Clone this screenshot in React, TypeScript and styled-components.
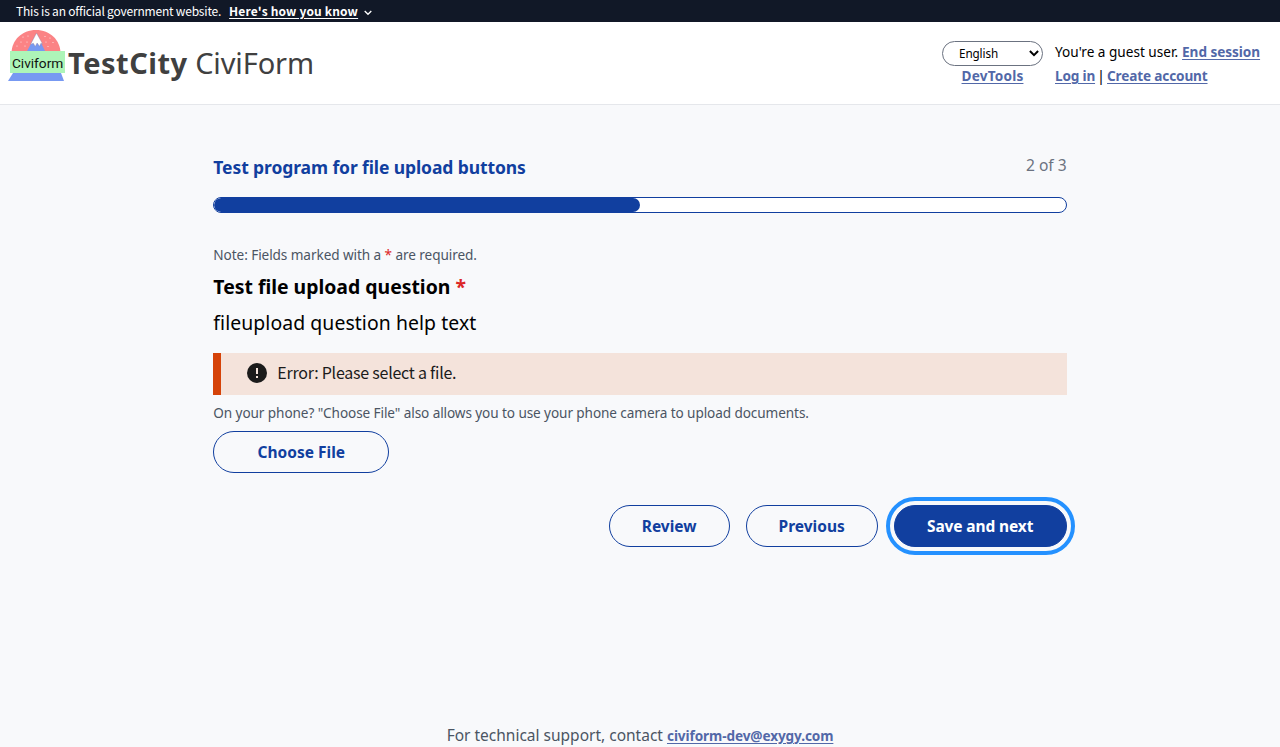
import React from 'react';
import styled, { createGlobalStyle, css } from 'styled-components';

const ui = '"Noto Sans", "Open Sans", sans-serif';
const notice = '"Noto Sans CJK SC", "Noto Sans", sans-serif';

const GlobalStyle = createGlobalStyle`
  *, *::before, *::after { box-sizing: border-box; }
  html, body { margin: 0; padding: 0; }
  body {
    height: 100vh;
    overflow: hidden;
    background: #f8f9fb;
    color: #000;
    font-family: ${ui};
  }
  h1, h2, p { margin: 0; font-weight: 400; }
`;

const Track = styled.span<{ $t: number }>`
  letter-spacing: ${(p) => p.$t}px;
`;

const Banner = styled.div`
  display: flex;
  align-items: center;
  height: 22px;
  padding: 0 16px;
  background: #111827;
  color: #fff;
  font: 400 12px/22px ${notice};
  letter-spacing: -0.2px;
  white-space: nowrap;
`;

const BannerToggle = styled.a`
  display: flex;
  align-items: center;
  margin-left: 8px;
  font-weight: 700;
  letter-spacing: 0.16px;
  svg { margin: 3px 0 0 6px; }
`;

const Underlined = styled.span`
  text-decoration: underline;
  text-underline-offset: 2px;
`;

const Header = styled.header`
  display: flex;
  justify-content: space-between;
  height: 83px;
  padding: 0 20px 0 8px;
  background: #fff;
  border-bottom: 1px solid #e5e7eb;
`;

const Brand = styled.div`
  display: flex;
  align-items: flex-start;
  padding-top: 8px;
`;

const BrandName = styled.h1`
  margin: 13px 0 0 3px;
  color: #404040;
  font-size: 29px;
  line-height: 40px;
  white-space: nowrap;
  b { letter-spacing: 0.5px; }
`;

const HeaderTools = styled.div`
  display: flex;
  gap: 12px;
  padding-top: 19px;
`;

const LanguageColumn = styled.div`
  display: flex;
  flex-direction: column;
  align-items: center;
  width: 101px;
`;

const LanguageSelect = styled.div`
  display: flex;
  align-items: center;
  justify-content: space-between;
  width: 101px;
  height: 25px;
  padding: 0 3px 0 16px;
  border: 1px solid #6b7280;
  border-radius: 13px;
  background: #fff;
  font-size: 11.7px;
  line-height: 21px;
  letter-spacing: -0.1px;
`;

const Account = styled.div`
  width: 205px;
  font-size: 13.6px;
  white-space: nowrap;
`;

const AccountLine = styled.div`
  display: flex;
  height: 24px;
  line-height: 22px;
`;

const Greeting = styled.span`
  margin-right: 4px;
`;

const Divider = styled.span`
  width: 12px;
  font-size: 14.5px;
  line-height: 20px;
  text-align: center;
`;

const Link = styled.a<{ $t?: number }>`
  color: #5268a8;
  font-size: 13.6px;
  font-weight: 700;
  letter-spacing: ${(p) => p.$t ?? 0}px;
  text-decoration: underline;
  text-underline-offset: 2px;
  text-decoration-thickness: 1px;
`;

const DevLink = styled(Link)`
  margin-top: -1px;
  line-height: 22px;
`;

const Main = styled.main`
  width: 853.33px;
  margin: 0 auto;
  padding-top: 43px;
`;

const TitleRow = styled.div`
  display: flex;
  justify-content: space-between;
  height: 40px;
`;

const ProgramTitle = styled.h2`
  color: #113f9f;
  font-size: 17.5px;
  font-weight: 700;
  line-height: 39px;
  letter-spacing: -0.1px;
`;

const StepCount = styled.span`
  color: #6b7280;
  font-size: 15.6px;
  line-height: 35px;
`;

const ProgressTrack = styled.div`
  height: 16px;
  margin-top: 9px;
  border: 1px solid #113f9f;
  border-radius: 8px;
  background: #fff;
  overflow: hidden;
`;

const ProgressFill = styled.div`
  width: 50%;
  height: 100%;
  border-radius: 8px;
  background: #113f9f;
`;

const Note = styled.p`
  color: #4b5563;
  font-size: 13.6px;
  line-height: 20px;
  letter-spacing: -0.08px;
`;

const RequiredNote = styled(Note)`
  margin-top: 32px;
`;

const PhoneNote = styled(Note)`
  margin: 8px 0;
  letter-spacing: -0.095px;
`;

const Star = styled.span`
  color: #dc2626;
`;

const Question = styled.h2`
  margin-top: 8px;
  font-size: 19.4px;
  font-weight: 700;
  line-height: 28px;
`;

const HelpText = styled.p`
  margin: 8px 0 16px;
  font-size: 19.4px;
  line-height: 28px;
  letter-spacing: 0.08px;
`;

const ErrorAlert = styled.div`
  display: flex;
  align-items: center;
  height: 42px;
  padding: 0 0 4px 24px;
  border-left: 8px solid #d54309;
  background: #f4e3db;
  color: #1b1b1b;
  font: 400 16px/38px ${notice};
  letter-spacing: -0.24px;
  svg { margin: 2px 8px 0 0; }
`;

const Button = styled.button<{ $primary?: boolean; $w: number }>`
  width: ${(p) => p.$w}px;
  height: 42px;
  padding: 0;
  border: 1px solid #113f9f;
  border-radius: 21px;
  background: transparent;
  color: #113f9f;
  font: 700 15.5px/24px ${ui};
  white-space: nowrap;
  ${(p) =>
    p.$primary &&
    css`
      background: #113f9f;
      color: #fff;
      letter-spacing: -0.12px;
      outline: 4px solid #2491ff;
      outline-offset: 4px;
    `}
`;

const Actions = styled.div`
  display: flex;
  justify-content: flex-end;
  gap: 16px;
  margin-top: 32px;
`;

const Footer = styled.footer`
  margin-top: 176px;
  color: #4b5563;
  font-size: 15.5px;
  line-height: 24px;
  text-align: center;
`;

function Logo() {
  return (
    <svg width="57" height="52" viewBox="8 30 57 52">
      <path d="M11.500 53.500C11.500 40 22 30 36 30s24.500 10 24.500 23.500z" fill="#fb8385" />
      <path d="M36.500 33.500 46 53H26z" fill="#7799f2" />
      <path d="M36.500 33l-6 11.500 2.800-1.300 2 3.300 1.800-3.500 2.500 3.300 1.300-3 1.800.8z" fill="#fff" stroke="#8b7c9c" strokeWidth=".4" />
      <g fill="#fff" opacity=".8">
        {[[23, 37], [28, 36], [21, 42], [27, 42], [17, 46], [25, 46], [45, 36.5], [50, 38], [46, 42], [53, 42.5], [48, 46.5]].map(([x, y]) => (
          <circle key={`${x}-${y}`} cx={x} cy={y} r=".6" />
        ))}
      </g>
      <path d="M13 73h48l3 8H8z" fill="#7799f2" />
      <path d="M10 51h55v22H10z" fill="#adf5b8" />
      <text x="11.900" y="67.700" fontFamily="Roboto, sans-serif" fontSize="13.700" fill="#111">Civiform</text>
    </svg>
  );
}

export default function App() {
  return (
    <>
      <GlobalStyle />
      <Banner>
        This is an official government website.
        <BannerToggle>
          <Underlined>Here's how you know</Underlined>
          <svg width="8" height="6" viewBox="0 0 8 6" fill="none" stroke="#fff" strokeWidth="1.300">
            <path d="M.7 1 4 4.300 7.300 1" />
          </svg>
        </BannerToggle>
      </Banner>
      <Header>
        <Brand>
          <Logo />
          <BrandName>
            <b>TestCity</b> <Track $t={-0.12}>CiviForm</Track>
          </BrandName>
        </Brand>
        <HeaderTools>
          <LanguageColumn>
            <LanguageSelect>
              <span>English</span>
              <svg width="10" height="7" viewBox="0 0 10 7" fill="none" stroke="#000" strokeWidth="2">
                <path d="M.9 1 5 5.100 9.100 1" />
              </svg>
            </LanguageSelect>
            <DevLink $t={0.2}>DevTools</DevLink>
          </LanguageColumn>
          <Account>
            <AccountLine>
              <Greeting>You're a guest user.</Greeting>
              <Link $t={-0.05}>End session</Link>
            </AccountLine>
            <AccountLine>
              <Link $t={-0.18}>Log in</Link>
              <Divider>|</Divider>
              <Link $t={-0.15}>Create account</Link>
            </AccountLine>
          </Account>
        </HeaderTools>
      </Header>
      <Main>
        <TitleRow>
          <ProgramTitle>Test program for file upload buttons</ProgramTitle>
          <StepCount>2 of 3</StepCount>
        </TitleRow>
        <ProgressTrack>
          <ProgressFill />
        </ProgressTrack>
        <RequiredNote>
          Note: Fields marked with a <Star>*</Star> are required.
        </RequiredNote>
        <Question>
          Test file upload question <Star>*</Star>
        </Question>
        <HelpText>fileupload question help text</HelpText>
        <ErrorAlert>
          <svg width="24" height="24" viewBox="0 0 24 24">
            <circle cx="12" cy="12" r="10" fill="#1b1b1b" />
            <path d="M11 7h2v6h-2zM11 15h2v2h-2z" fill="#f4e3db" />
          </svg>
          Error: Please select a file.
        </ErrorAlert>
        <PhoneNote>
          On your phone? "Choose File" also allows you to use your phone camera to upload documents.
        </PhoneNote>
        <Button $w={176}>Choose File</Button>
        <Actions>
          <Button $w={121}>Review</Button>
          <Button $w={132}>Previous</Button>
          <Button $w={173} $primary>
            Save and next
          </Button>
        </Actions>
      </Main>
      <Footer>
        For technical support, contact <Link $t={-0.1}>civiform-dev@exygy.com</Link>
      </Footer>
    </>
  );
}
